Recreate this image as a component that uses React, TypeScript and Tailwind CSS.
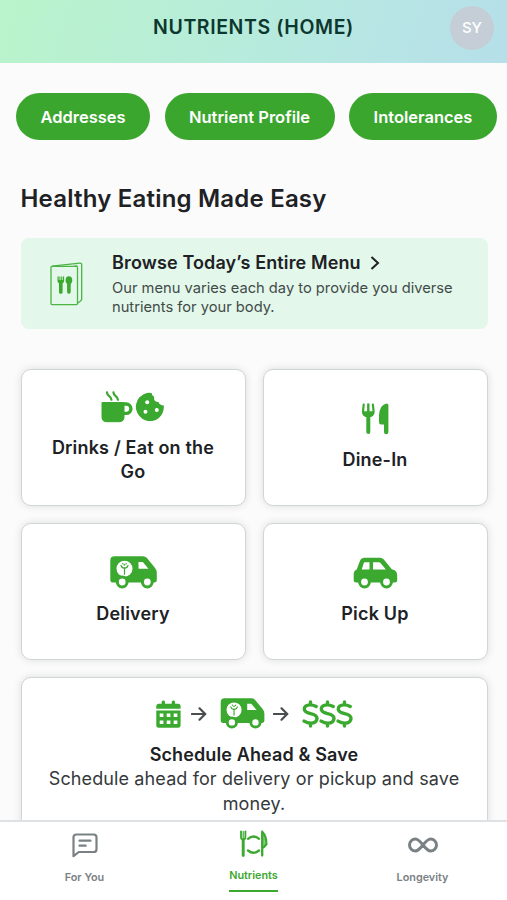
import type { ReactNode } from 'react';

const pills = [
  { label: 'Addresses', width: 'w-[134px]' },
  { label: 'Nutrient Profile', width: 'w-[170px]' },
  { label: 'Intolerances', width: 'w-[148px]' },
];

function MenuIcon() {
  return (
    <svg width="34" height="44" viewBox="0 0 34 44" fill="none">
      <g stroke="#4cb443" strokeWidth="1.3" strokeLinejoin="round">
        <rect x="1" y="4.4" width="26.500" height="38.2" rx="1" />
        <path d="M2 4.2 29.700 1.1Q31.700 1 31.700 3V37Q31.700 38.3 30.600 39L27.700 41" />
        <path d="M24.500 4.2 27.500 3.9" />
      </g>
      <g fill="#3ba82f">
        <path d="M7.500 14.500h1.200v3.500h.7v-3.500h1v3.500h.8v-3.500h1v3.500h.7v-3.500h1.200v4.200q0 2-1.500 2.600V30.500q0 1.200-1.800 1.200T9 30.500v-9.200Q7.500 20.700 7.500 18.700z" />
        <ellipse cx="18.900" cy="18.200" rx="3.300" ry="3.900" />
        <rect x="17.100" y="20" width="3.600" height="11.700" rx="1.700" />
      </g>
    </svg>
  );
}

function CupIcon() {
  return (
    <svg width="32" height="32" viewBox="0 0 32 32" fill="none">
      <path
        d="M1 11.500h22v14.500q0 4.700-4.700 4.700H5.700Q1 30.700 1 26z"
        fill="#3ba82f"
        stroke="#3ba82f"
        strokeLinejoin="round"
      />
      <path
        d="M22 13h3.200a4.700 4.700 0 0 1 0 9.400H22"
        stroke="#3ba82f"
        strokeWidth="3.400"
      />
      <path
        d="M6 1.500c.2 4 4.200 3.300 4.400 7.200M12.500 1.500c.2 4 4.200 3.300 4.400 7.200"
        stroke="#3ba82f"
        strokeWidth="2.300"
        strokeLinecap="round"
      />
    </svg>
  );
}

function CookieIcon() {
  return (
    <svg width="30" height="30" viewBox="0 0 30 30">
      <path
        d="M16.600.9Q12 0 8.600 2.200L4.500 5.200Q1.800 8 1.200 12q-.8 3 0 5.800.8 3.700 3.200 6.200 2.500 3 5.800 4.200 3.500 1.200 7 .700 3.800-.6 6.700-3 2.800-2.300 4-5.700 1.100-3 1-6.700-1.900.1-3.500-.9-1.600-1-1.900-2.700-3 .2-4-1.600-.8-1.300-.3-3.200-2.500-1.400-2.600-4.200z"
        fill="#3ba82f"
      />
      <g fill="#fff">
        <circle cx="12.200" cy="10.300" r="2" />
        <circle cx="10.500" cy="19.700" r="2" />
        <circle cx="21.800" cy="18" r="2" />
      </g>
    </svg>
  );
}

function DineIcon() {
  return (
    <svg width="28" height="32" viewBox="0 0 28 32" fill="none">
      <g stroke="#3ba82f" strokeLinecap="round" strokeLinejoin="round">
        <path d="M7.300 15v14" strokeWidth="4" />
        <path d="M2.700 1.500 2 8.500q0 4.500 5.300 5 5.300-.5 5.300-5L11.900 1.500" strokeWidth="2.200" />
        <path d="M7.300 1.500v12" strokeWidth="2.400" />
      </g>
      <path d="M2.500 8.300h9.800q0 6-5 6t-4.800-6z" fill="#3ba82f" />
      <path
        d="M27.400 2v27q0 2.200-2.200 2.200T23 29v-7.500h-2.800q-2.200 0-2.200-2.500v-6.500Q18.500 1.500 25.700.4q1.700 0 1.700 1.600z"
        fill="#3ba82f"
      />
    </svg>
  );
}

function VanIcon({ className }: { className: string }) {
  return (
    <svg className={className} viewBox="0 0 47 33" fill="none">
      <path
        d="M4.500.3H33q2.200 0 3.700 1.500l7.800 9.500q2.300 2.700 2.300 5.200v7.700q0 2.300-2.500 2.300H3Q.3 26.500.3 23.700V4.500Q.3.300 4.500.3z"
        fill="#3ba82f"
      />
      <path d="M28.500 6h4.300l5.700 6.800h-10z" fill="#fff" />
      <circle cx="14.500" cy="12.700" r="8" fill="#fff" />
      <g stroke="#3ba82f" strokeWidth="1.200" strokeLinecap="round">
        <path d="M14.500 11.500v6.700M11 9.500q.5 2.300 3.500 3 3-.7 3.500-3M12.700 7.500l.3.400M16.300 7.500l-.3.400" />
      </g>
      <circle cx="14.500" cy="8.800" r=".9" fill="#3ba82f" />
      <g fill="#fff" stroke="#3ba82f" strokeWidth="3">
        <circle cx="12.200" cy="26" r="4.900" />
        <circle cx="37.300" cy="26" r="4.900" />
      </g>
    </svg>
  );
}

function CarIcon() {
  return (
    <svg width="45" height="32" viewBox="0 0 45 32">
      <path
        d="M11.500.7H27q2.300 0 3.800 1.800l8 9.800q5.400.8 5.400 6.200v4.500q0 2.500-2.500 2.500H3.200Q.700 25.500.700 23v-5.500q0-4 3-5L7 3.800Q8.300.7 11.500.7z"
        fill="#3ba82f"
      />
      <path d="M11.700 5.300h4.800v7.200H8.700l2-6.200q.3-1 1-1zM20 5.300h6q.9 0 1.500.8l5.400 6.400H20z" fill="#fff" />
      <g fill="#fff" stroke="#3ba82f" strokeWidth="3">
        <circle cx="11.500" cy="25" r="4.900" />
        <circle cx="33.500" cy="25" r="4.900" />
      </g>
    </svg>
  );
}

function CalendarIcon() {
  return (
    <svg width="25" height="28" viewBox="0 0 25 28">
      <g fill="#3ba82f">
        <rect x="5.600" y=".4" width="3.400" height="6" rx="1.500" />
        <rect x="15.700" y=".4" width="3.400" height="6" rx="1.500" />
        <path d="M2.800 3.800h19.300q2.500 0 2.500 2.700v2.200H.3V6.500q0-2.700 2.500-2.700zM.3 10.600h24.300V25q0 2.700-2.500 2.700H2.800Q.3 27.700.3 25z" />
      </g>
      <path
        d="M3.700 13.400h3.700v3.500H3.700zM10.700 13.400h3.700v3.500h-3.700zM17.700 13.400h3.700v3.500h-3.700zM3.700 20.400h3.700v3.500H3.700zM10.700 20.400h3.700v3.500h-3.700zM17.700 20.400h3.700v3.500h-3.700z"
        fill="#fff"
      />
    </svg>
  );
}

function ArrowIcon() {
  return (
    <svg width="16" height="14" viewBox="0 0 16 14" fill="none" stroke="#4a4d50" strokeWidth="2.200">
      <path d="M.9 7h13M8.500 1.300 14.200 7l-5.700 5.700" strokeLinecap="round" />
    </svg>
  );
}

function DollarIcon() {
  return (
    <svg width="17" height="28" viewBox="0 0 17 28" fill="none" stroke="#3ba82f" strokeWidth="3.400" strokeLinecap="round">
      <path d="M8.500 1.900v3M8.500 23.100v3M14.200 6.500q-3-1.600-6-1.600-5.700.1-5.900 4-.1 3.300 6.200 4.700 6.600 1.400 6.500 5-.4 4.500-6.200 4.500-3.400 0-6.700-2" />
    </svg>
  );
}

function ChatIcon() {
  return (
    <svg width="26" height="25" viewBox="0 0 26 25" fill="none" stroke="#7a8184" strokeWidth="2.200">
      <path
        d="M4.300 1.500h17.400q2.800 0 2.800 2.800v11.900q0 2.800-2.800 2.800H6.800l-5.300 4.200V4.300q0-2.800 2.800-2.800z"
        strokeLinejoin="round"
      />
      <path d="M7.500 7.700h11M7.500 12.700h6.200" strokeLinecap="round" />
    </svg>
  );
}

function PlateIcon() {
  return (
    <svg width="30" height="28" viewBox="0 0 30 28" fill="none" stroke="#3ba82f" strokeLinecap="round">
      <path d="M2 1.500v5.800q0 2.200 2.200 2.500 2.200-.3 2.200-2.500V1.500" strokeWidth="1.800" />
      <path d="M4.200 1.500V9" strokeWidth="1.200" />
      <path d="M4.200 10v15.500" strokeWidth="2.900" />
      <path d="M9 8.800q5.600-4.600 11 0M9 20.500q5.600 4.600 11 0" strokeWidth="2.300" />
      <path
        d="M23.200 1.700v23.800M23.200 1.700q4.200 4.300 4.200 12.500l-2.700 3"
        strokeWidth="2.300"
        strokeLinejoin="round"
      />
      <path d="M24 4q2.800 5 2.700 11.500H24z" fill="#3ba82f" stroke="none" opacity=".6" />
    </svg>
  );
}

function InfinityIcon() {
  return (
    <svg width="30" height="16" viewBox="0 0 30 16" fill="none" stroke="#7a8184" strokeWidth="3">
      <path d="M15 8C11.800 4 10 2 7.500 2a6 6 0 0 0 0 12C10 14 11.800 12 15 8s5-6 7.500-6a6 6 0 0 1 0 12C20 14 18.200 12 15 8z" />
    </svg>
  );
}

function Card({ icon, label }: { icon: ReactNode; label: string }) {
  return (
    <div className="flex h-[137px] flex-col items-center justify-center rounded-[10px] border border-[#d0d5d7] bg-white px-6 pb-[1px] shadow-[0_0_8px_rgba(0,0,0,0.12)]">
      <div className="flex h-[34px] items-center gap-[2px]">{icon}</div>
      <div className="mt-[12px] text-center text-[18px] font-semibold leading-[24.500px] tracking-[0.180px]">
        {label}
      </div>
    </div>
  );
}

export default function App() {
  return (
    <div className="flex h-[900px] w-[507px] flex-col overflow-hidden bg-[#fbfbfb] font-['Inter',sans-serif] text-[#202124]">
      <header className="relative flex h-[63px] shrink-0 items-center justify-center bg-[linear-gradient(105deg,#b9f4cb_0%,#b7ebdc_50%,#b7e5e5_75%,#b6dfe9_100%)]">
        <h1 className="-mt-[7px] text-[19.5px] font-semibold tracking-[0.6px] text-[#0c372e]">
          NUTRIENTS (HOME)
        </h1>
        <div className="absolute right-[13px] top-[6px] flex size-[44px] items-center justify-center rounded-full bg-[#c5ced7] pt-px text-[15px] font-medium text-white">
          SY
        </div>
      </header>

      <main className="h-[757px] shrink-0 overflow-hidden">
        <div className="flex gap-[14.5px] pl-[16px] pt-[30px]">
          {pills.map((pill) => (
            <button
              key={pill.label}
              type="button"
              className={`h-[47px] shrink-0 whitespace-nowrap rounded-full bg-[#3ba62e] pt-[2px] text-[16.5px] font-semibold text-white ${pill.width}`}
            >
              {pill.label}
            </button>
          ))}
        </div>

        <div className="pl-[20.5px] pr-[19.5px] pt-[43px]">
          <h2 className="text-[24px] font-semibold leading-8 tracking-[0.2px]">
            Healthy Eating Made Easy
          </h2>

          <div className="mt-[23px] flex h-[91px] items-center rounded-[8px] bg-[#e3f7eb] pl-[29.5px]">
            <MenuIcon />
            <div className="ml-[28px] pt-px">
              <div className="flex items-center text-[18px] font-semibold leading-6 tracking-[0.130px]">
                Browse Today’s Entire Menu
                <svg className="ml-[9px]" width="10" height="14" viewBox="0 0 10 14" fill="none" stroke="currentColor" strokeWidth="2">
                  <path d="M1.500 1 8 7l-6.500 6" />
                </svg>
              </div>
              <p className="mt-[4px] w-[352px] text-[14.7px] leading-[19.5px] text-[#424b48]">
                Our menu varies each day to provide you diverse nutrients for your body.
              </p>
            </div>
          </div>

          <div className="mt-[40px] grid grid-cols-2 gap-x-[17px] gap-y-[17px]">
            <Card icon={<><CupIcon /><CookieIcon /></>} label="Drinks / Eat on the Go" />
            <Card icon={<DineIcon />} label="Dine-In" />
            <Card icon={<VanIcon className="h-[33px] w-[47px]" />} label="Delivery" />
            <Card icon={<CarIcon />} label="Pick Up" />
            <div className="col-span-2 h-[180px] rounded-[10px] border border-[#d0d5d7] bg-white px-5 pt-[19px] text-center text-[18px] leading-[24.500px] tracking-[0.120px] shadow-[0_0_8px_rgba(0,0,0,0.12)]">
              <div className="flex h-[34px] items-center justify-center">
                <CalendarIcon />
                <div className="ml-[10px]"><ArrowIcon /></div>
                <VanIcon className="mb-[2px] ml-[13px] h-[31px] w-[45px]" />
                <div className="ml-[8px]"><ArrowIcon /></div>
                <div className="ml-[13px] flex">
                  <DollarIcon />
                  <DollarIcon />
                  <DollarIcon />
                </div>
              </div>
              <div className="mt-[11.5px] font-semibold">Schedule Ahead &amp; Save</div>
              <p className="text-[#36393b]">Schedule ahead for delivery or pickup and save money.</p>
            </div>
          </div>
        </div>
      </main>

      <nav className="relative grid h-[80px] shrink-0 grid-cols-3 border-t-2 border-[#dfe2e4] bg-white text-[10.8px] font-semibold text-[#7a8184]">
        <div className="flex flex-col items-center pt-[11px]">
          <ChatIcon />
          <span className="mt-[12px]">For You</span>
        </div>
        <div className="flex flex-col items-center pt-[8px] text-[#3ba82f]">
          <PlateIcon />
          <span className="mt-[10px]">Nutrients</span>
          <span className="mt-[6px] h-[2px] w-[49px] bg-[#3ba82f]" />
        </div>
        <div className="flex flex-col items-center pt-[15px]">
          <InfinityIcon />
          <span className="mt-[17px]">Longevity</span>
        </div>
      </nav>
    </div>
  );
}
